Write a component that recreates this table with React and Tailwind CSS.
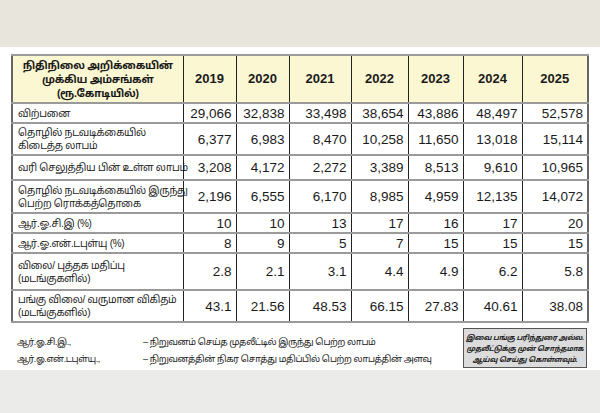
import React from 'react';

const font = { fontFamily: '"Liberation Sans", "Noto Sans Tamil", "Lohit Tamil", "Noto Sans", sans-serif' };

const years = ['2019', '2020', '2021', '2022', '2023', '2024', '2025'];
const colW = ['w-[171px]', 'w-[53px]', 'w-[53px]', 'w-[62px]', 'w-[57px]', 'w-[55px]', 'w-[59px]', 'w-[66px]'];

const rows = [
    { h: 'h-[20px]', label: ['விற்பனை'], v: ['29,066', '32,838', '33,498', '38,654', '43,886', '48,497', '52,578'] },
    { h: 'h-[32px]', label: ['தொழில் நடவடிக்கையில்', 'கிடைத்த லாபம்'], v: ['6,377', '6,983', '8,470', '10,258', '11,650', '13,018', '15,114'] },
    { h: 'h-[25px]', label: ['வரி செலுத்திய பின் உள்ள லாபம்'], v: ['3,208', '4,172', '2,272', '3,389', '8,513', '9,610', '10,965'] },
    { h: 'h-[33px]', label: ['தொழில் நடவடிக்கையில் இருந்து', 'பெற்ற ரொக்கத்தொகை'], v: ['2,196', '6,555', '6,170', '8,985', '4,959', '12,135', '14,072'] },
    { h: 'h-[20px]', label: ['ஆர்.ஓ.சி.இ (%)'], v: ['10', '10', '13', '17', '16', '17', '20'] },
    { h: 'h-[20px]', label: ['ஆர்.ஓ.என்.டபுள்யு (%)'], v: ['8', '9', '5', '7', '15', '15', '15'] },
    { h: 'h-[37px]', label: ['விலை/ புத்தக மதிப்பு', '(மடங்குகளில்)'], v: ['2.8', '2.1', '3.1', '4.4', '4.9', '6.2', '5.8'] },
    { h: 'h-[32px]', label: ['பங்கு விலை/ வருமான விகிதம்', '(மடங்குகளில்)'], v: ['43.1', '21.56', '48.53', '66.15', '27.83', '40.61', '38.08'] },
];

const cell = 'border-x border-x-[#222] border-y-2 border-y-[#9a9a9a] p-0';

export default function App() {
    return (
        <div className="w-[600px] h-[413px] bg-white flex flex-col overflow-hidden text-[#1a1a1a]" style={font}>
            <div className="h-[47px] bg-[#e7e5dc] shrink-0" />

            <div className="h-[323px] flex flex-col pl-[11px] pt-[7px] shrink-0">
                <table className="border-collapse table-fixed w-[576px] border-2 border-[#666]">
                    <colgroup>
                        {colW.map((w, i) => <col key={i} className={w} />)}
                    </colgroup>
                    <thead>
                        <tr className="h-[48px] bg-[#fbf7d2]">
                            <th className={`${cell} text-center font-bold text-[10.5px] leading-[14px] tracking-[-0.3px] whitespace-nowrap`}>
                                நிதிநிலை அறிக்கையின்<br />முக்கிய அம்சங்கள்<br />(ரூ.கோடியில்)
                            </th>
                            {years.map(y => (
                                <th key={y} className={`${cell} text-center font-bold text-[13px] leading-[16px]`}>{y}</th>
                            ))}
                        </tr>
                    </thead>
                    <tbody>
                        {rows.map((r, i) => (
                            <tr key={i} className={r.h}>
                                <td className={`${cell} pl-[5px] text-[10px] leading-[13px] tracking-[-0.3px] whitespace-nowrap`}>
                                    {r.label.map((l, j) => <div key={j}>{l}</div>)}
                                </td>
                                {r.v.map((v, j) => (
                                    <td key={j} className={`${cell} text-right pr-[4px] text-[13.5px] leading-[15px]`}>{v}</td>
                                ))}
                            </tr>
                        ))}
                    </tbody>
                </table>

                {/* குறிப்புகள் */}
                <div className="flex w-[576px] mt-[5px]">
                    <div className="flex flex-col pl-[6px] pt-[8px] gap-[4px] text-[9px] leading-[13px] tracking-[-0.4px] whitespace-nowrap">
                        <div className="flex">
                            <span className="w-[126px]">ஆர்.ஓ.சி.இ.,</span>
                            <span>– நிறுவனம் செய்த முதலீட்டில் இருந்து பெற்ற லாபம்</span>
                        </div>
                        <div className="flex">
                            <span className="w-[126px]">ஆர்.ஓ.என்.டபுள்யு.,</span>
                            <span>– நிறுவனத்தின் நிகர சொத்து மதிப்பில் பெற்ற லாபத்தின் அளவு</span>
                        </div>
                    </div>
                    <div className="ml-auto w-[124px] h-[40px] shrink-0 bg-[#dcdcdc] border border-[#555] flex flex-col items-center justify-center text-[7px] leading-[11px] italic font-bold text-center whitespace-nowrap tracking-[-0.2px]">
                        <span>இவை பங்கு பரிந்துரை அல்ல.</span>
                        <span>முதலீட்டுக்கு முன் சொந்தமாக</span>
                        <span>ஆய்வு செய்து கொள்ளவும்.</span>
                    </div>
                </div>
            </div>

            <div className="flex-1 bg-[#ebebe9]" />
        </div>
    );
}
